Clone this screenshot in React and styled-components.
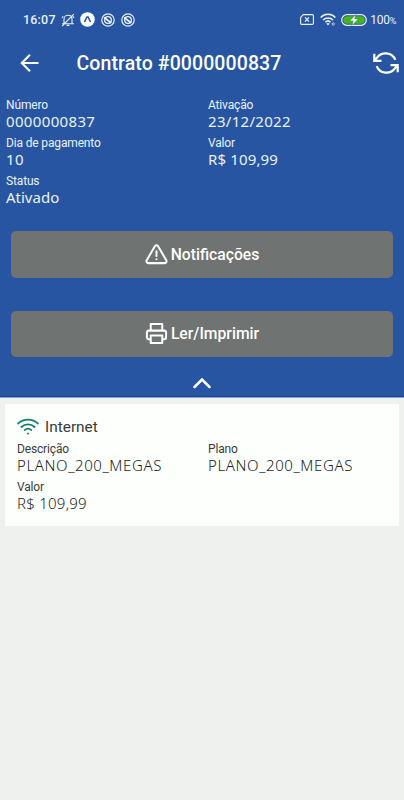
import React from 'react';
import styled, { createGlobalStyle } from 'styled-components';

const Colors = {
  primary: '#2755a1',
  button: '#6f7371',
  background: '#eff1ef',
  white: '#fdfffd',
  light: '#e9f2fa',
  green: '#11816a',
  text: '#1c1e1c',
  label: '#3a3c3a',
};

const GlobalStyle = createGlobalStyle`
  * {
    box-sizing: border-box;
  }

  body {
    margin: 0;
    background: ${Colors.background};
    font-family: Roboto, sans-serif;
  }
`;

const Screen = styled.div`
  width: 404px;
  height: 800px;
  overflow: hidden;
  background: ${Colors.background};
`;

const Top = styled.div`
  height: 398px;
  background: ${Colors.primary};
  border-bottom: 1px solid #8aa5cd;
  box-shadow: inset 0 -1px 0 #1c489a;
  color: ${Colors.light};
`;

const StatusBar = styled.div`
  display: flex;
  align-items: center;
  height: 39px;
  padding: 0 8px 0 23px;
`;

const Clock = styled.span`
  width: 38px;
  font-size: 12.5px;
  font-weight: 500;
  letter-spacing: .2px;
  white-space: nowrap;
`;

const StatusIcon = styled.svg`
  display: block;
  flex: none;
  width: ${props => props.$width}px;
  height: ${props => props.$height}px;
  margin-left: ${props => props.$gap || 0}px;
  fill: none;
  stroke: currentColor;
`;

const Spacer = styled.div`
  flex: 1;
`;

const Battery = styled.span`
  margin-left: 3px;
  padding-top: 2px;
  font-size: 12px;
  line-height: 14px;
  letter-spacing: -.3px;
  white-space: nowrap;

  small {
    font-size: 9px;
  }
`;

const Header = styled.header`
  display: flex;
  align-items: center;
  height: 47px;
  padding: 0 5px 0 18px;
  color: ${Colors.white};
`;

const Title = styled.h1`
  flex: 1;
  margin: 0 0 0 34.5px;
  padding-top: 2px;
  font-size: 19.5px;
  font-weight: 500;
  letter-spacing: .1px;
  white-space: nowrap;
`;

const HeaderIcon = styled.svg`
  display: block;
  flex: none;
  fill: none;
  stroke: currentColor;
`;

const Details = styled.div`
  display: grid;
  grid-template-columns: 202px 1fr;
  padding: 11px 0 0 6px;
`;

const Field = styled.div`
  height: 38px;
  white-space: nowrap;
`;

const Label = styled.div`
  height: 15px;
  font-size: 12px;
  line-height: 16px;
  letter-spacing: -.15px;
`;

const Value = styled.div`
  height: 18px;
  font-family: "Noto Sans", "Open Sans", sans-serif;
  font-size: 15px;
  font-weight: ${props => props.$weight || 400};
  line-height: 18px;
  letter-spacing: ${props => props.$spacing || 0}px;
`;

const Actions = styled.div`
  display: flex;
  flex-direction: column;
  gap: 33px;
  padding: 20px 11px 0;
`;

const Button = styled.button`
  display: flex;
  align-items: center;
  justify-content: center;
  gap: 3px;
  height: 46.5px;
  padding: 0;
  border: 0;
  border-radius: 5px;
  background: ${Colors.button};
  color: ${Colors.white};
  font-family: Roboto, sans-serif;
  font-size: 15.7px;
  font-weight: 500;
`;

const ButtonIcon = styled.svg`
  width: 23px;
  height: 23px;
  fill: none;
  stroke: currentColor;
  stroke-width: 2.1;
  stroke-linecap: round;
  stroke-linejoin: round;
`;

const Toggle = styled.div`
  display: flex;
  justify-content: center;
  padding-top: 20px;
  color: ${Colors.white};
`;

const Card = styled.section`
  height: 122px;
  margin: 6px 5px 0;
  padding: 11px 0 0 12px;
  background: ${Colors.white};
  color: ${Colors.text};

  ${Label} {
    color: ${Colors.label};
  }
`;

const CardTitle = styled.div`
  display: flex;
  align-items: center;
  gap: 6px;
  height: 23px;
  color: ${Colors.label};
  font-size: 15.4px;
`;

const CardFields = styled.div`
  display: grid;
  grid-template-columns: 191px 1fr;
  padding-top: 3px;
`;

const BellOff = () => (
  <StatusIcon $width={14} $height={14} viewBox="0 0 14 14" strokeWidth="1.1">
    <path d="M3 10.5V6.2C3 3.8 4.8 2.3 7 2.3s4 1.5 4 3.9v4.3M1.2 10.7h11.6M5.6 12.4h2.8M1.2 13 12.8 1.2M1 5l1.2-1.7M13 5l-1.2-1.7" />
  </StatusIcon>
);

const AppBadge = () => (
  <StatusIcon $width={15} $height={15} $gap={5} viewBox="0 0 15 15">
    <circle cx="7.5" cy="7.5" r="7.3" fill="#fdfffd" stroke="none" />
    <path d="m4.5 10 2.4-5h1.2l2.4 5" stroke="#2755a1" strokeWidth="1.5" />
  </StatusIcon>
);

const BlockBadge = ({ gap }) => (
  <StatusIcon $width={14} $height={14} $gap={gap} viewBox="0 0 14 14">
    <circle cx="7" cy="7" r="6.2" strokeWidth="1.2" />
    <circle cx="7" cy="7" r="3.3" strokeWidth="1.3" />
    <path d="m3 4.4 7.3 5.6" strokeWidth="1.7" />
  </StatusIcon>
);

const NoSim = () => (
  <StatusIcon $width={14} $height={11} viewBox="0 0 14 11" strokeWidth="1.1">
    <path d="M3.3.6h8.9q1.2 0 1.2 1.2v7.4q0 1.2-1.2 1.2H1.8Q.6 10.4.6 9.2V3.4z" />
    <path d="m5 3.4 4 4.2m0-4.2L5 7.6" strokeWidth="1.3" />
  </StatusIcon>
);

const StatusWifi = () => (
  <StatusIcon $width={16} $height={13} $gap={6} viewBox="0 0 16 13" strokeWidth="1.5">
    <path d="M.6 4.5c4-4.2 10.8-4.2 14.8 0M3 7c2.8-2.8 7.2-2.8 10 0M5.4 9.2c1.5-1.5 3.7-1.5 5.2 0" />
    <path d="m6.3 10.6 1.7 1.8 1.7-1.8q-1.7-1.3-3.4 0z" fill="currentColor" stroke="none" />
    <circle cx="13.2" cy="11" r="1.2" strokeWidth="1" opacity=".7" />
  </StatusIcon>
);

const BatteryIcon = () => (
  <StatusIcon $width={26} $height={12} $gap={5.5} viewBox="0 0 26 12">
    <rect x=".7" y=".7" width="24.6" height="10.6" rx="5.3" strokeWidth="1.2" />
    <rect x="2.3" y="2.3" width="21.4" height="7.4" rx="3.7" fill="#45b51f" stroke="none" />
    <path d="M15 .4 8.6 6.9h3.6L10.8 11.6l6.6-6.7h-3.6z" fill="#fff" stroke="#2d7b59" strokeWidth=".5" />
  </StatusIcon>
);

const WifiIcon = () => (
  <HeaderIcon width="22" height="17" viewBox="0 0 22 17" color={Colors.green} strokeWidth="1.7" strokeLinecap="round">
    <path d="M1 5.6C6.7.3 15.3.3 21 5.6M4.4 9c3.9-3.4 9.3-3.4 13.2 0M7.7 12.1c2-1.7 4.6-1.7 6.6 0" />
    <circle cx="11" cy="15.4" r="1" fill="currentColor" stroke="none" />
  </HeaderIcon>
);

const Info = ({ label, value, spacing, weight }) => (
  <Field>
    <Label>{label}</Label>
    <Value $spacing={spacing} $weight={weight}>{value}</Value>
  </Field>
);

const App = () => {
  return (
    <>
      <GlobalStyle />
      <Screen>
        <Top>
          <StatusBar>
            <Clock>16:07</Clock>
            <BellOff />
            <AppBadge />
            <BlockBadge gap={6} />
            <BlockBadge gap={6} />
            <Spacer />
            <NoSim />
            <StatusWifi />
            <BatteryIcon />
            <Battery>100<small>%</small></Battery>
          </StatusBar>
          <Header>
            <HeaderIcon width="24" height="24" viewBox="0 0 24 24" strokeWidth="2.1">
              <path d="M20.5 12H3.5M12 3.8 3.8 12l8.2 8.2" />
            </HeaderIcon>
            <Title>Contrato #0000000837</Title>
            <HeaderIcon width="26" height="24" viewBox="0 0 26 24" strokeWidth="2.2">
              <path d="M1.3 2.8v7h7.2M24.7 21.2v-7h-7.2M22.3 8.9C19.3.9 8.5.1 3.9 6.9L1.6 9.5M24.4 14.5l-2.3 2.6C17.6 23.9 6.6 23.1 3.7 15.1" />
            </HeaderIcon>
          </Header>
          <Details>
            <Info label="Número" value="0000000837" spacing={0.35} />
            <Info label="Ativação" value="23/12/2022" spacing={0.3} />
            <Info label="Dia de pagamento" value="10" spacing={0.3} />
            <Info label="Valor" value="R$ 109,99" spacing={0.15} />
            <Info label="Status" value="Ativado" />
          </Details>
          <Actions>
            <Button>
              <ButtonIcon viewBox="0 0 24 24">
                <path d="M10.3 3.4 1.8 18a2 2 0 0 0 1.7 3h17a2 2 0 0 0 1.7-3L13.7 3.4a2 2 0 0 0-3.4 0zM12 8.5v5M12 17h.01" />
              </ButtonIcon>
              Notificações
            </Button>
            <Button>
              <ButtonIcon viewBox="0 0 24 24">
                <path d="M6 9V2h12v7M6 18H4a2 2 0 0 1-2-2v-5a2 2 0 0 1 2-2h16a2 2 0 0 1 2 2v5a2 2 0 0 1-2 2h-2M6 14h12v8H6z" />
              </ButtonIcon>
              Ler/Imprimir
            </Button>
          </Actions>
          <Toggle>
            <HeaderIcon width="18" height="12" viewBox="0 0 18 12" strokeWidth="2.5" strokeLinecap="round">
              <path d="m1.5 10 7.5-7.5 7.5 7.5" />
            </HeaderIcon>
          </Toggle>
        </Top>
        <Card>
          <CardTitle>
            <WifiIcon />
            Internet
          </CardTitle>
          <CardFields>
            <Info label="Descrição" value="PLANO_200_MEGAS" spacing={0.6} weight={300} />
            <Info label="Plano" value="PLANO_200_MEGAS" spacing={0.6} weight={300} />
            <Info label="Valor" value="R$ 109,99" spacing={0.25} weight={300} />
          </CardFields>
        </Card>
      </Screen>
    </>
  );
};

export default App;
